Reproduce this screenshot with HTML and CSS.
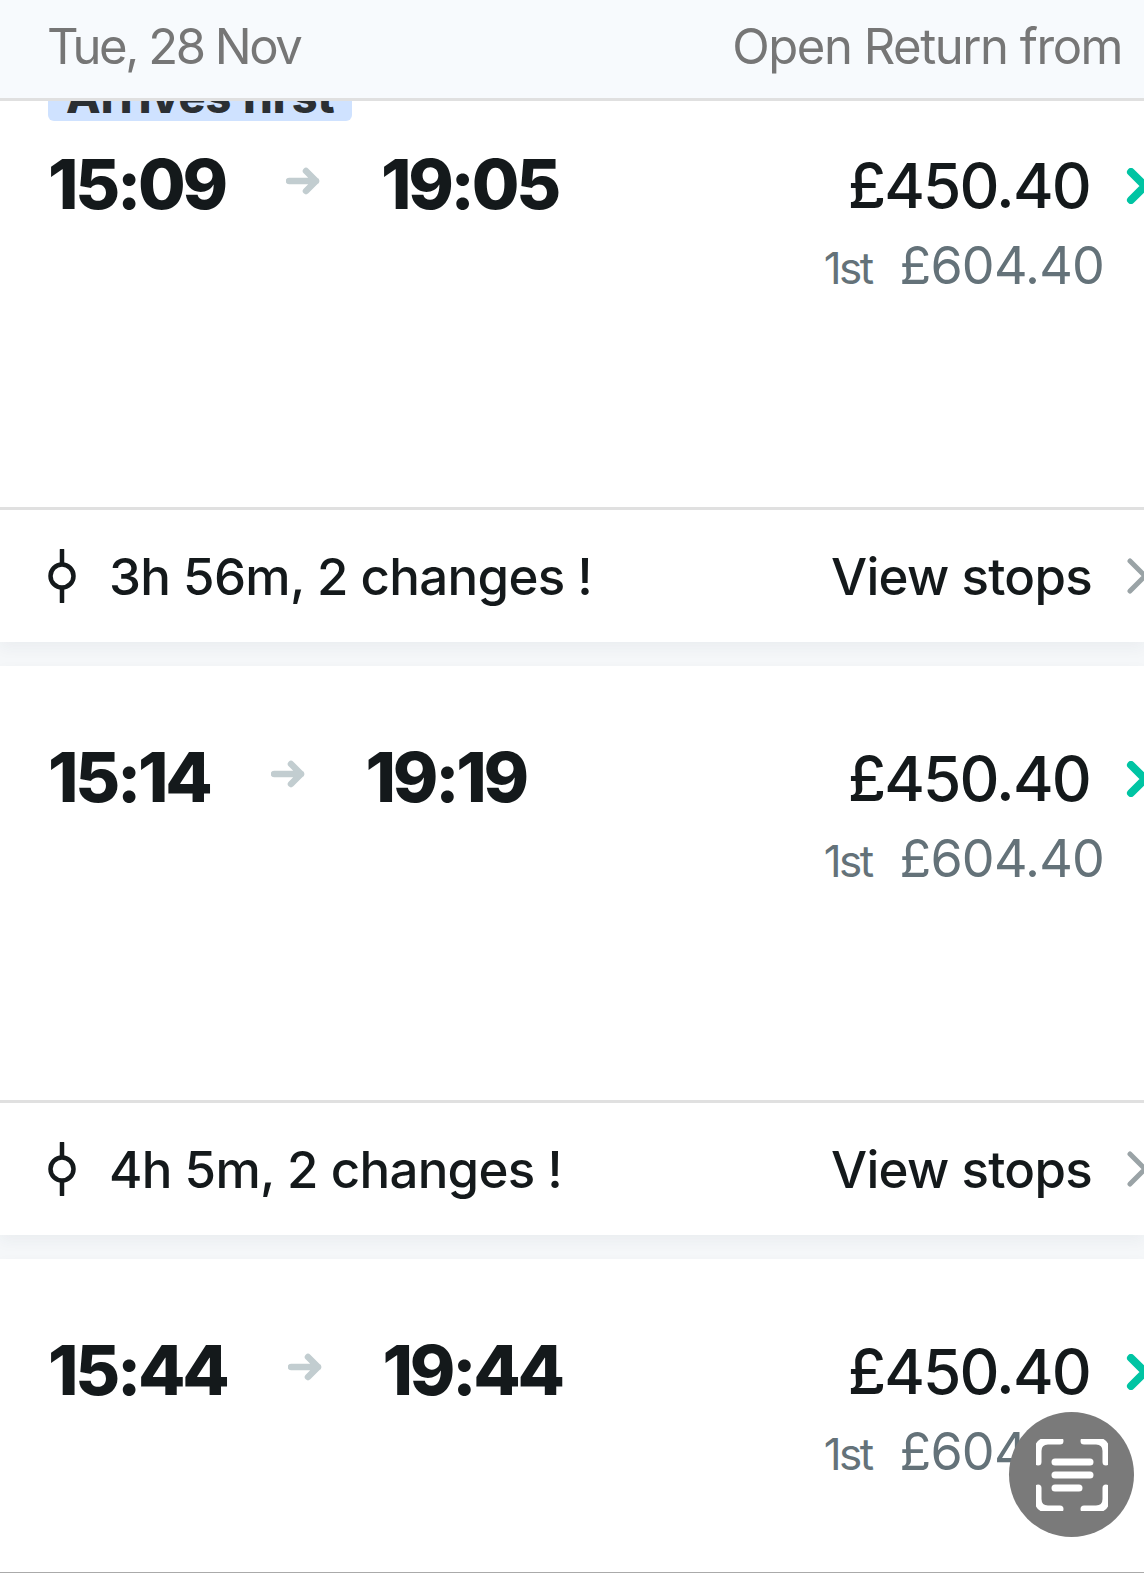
FILE: index.html
```html
<!DOCTYPE html>
<html lang="en">
<head>
<meta charset="utf-8">
<title>Train times</title>
<link rel="stylesheet" href="styles.css">
</head>
<body>
<div class="page">
  <header class="bar">
    <span class="bar-date">Tue, 28 Nov</span>
    <span class="bar-label">Open Return from</span>
  </header>
  <main class="list">
    <article class="card card-badged">
      <span class="badge">Arrives first</span>
      <div class="summary">
        <div class="times">
          <span class="time">15:09</span>
          <svg class="arrow" viewBox="0 0 34 28"><path d="M3 14H30M20 4L30 14L20 24"/></svg>
          <span class="time">19:05</span>
        </div>
        <div class="fares">
          <div class="fare-main">
            <span class="price">£450.40</span>
            <svg class="chev chev-green" viewBox="0 0 28 36"><path d="M5 4L19 18L5 32"/></svg>
          </div>
          <div class="fare-first"><span class="class-tag">1st</span><span class="price-first">£604.40</span></div>
        </div>
      </div>
      <div class="details">
        <svg class="stop-icon" viewBox="0 0 28 54"><path d="M14 1V14M14 40V53"/><circle cx="14" cy="27" r="11.5"/></svg>
        <span class="duration">3h 56m, 2 changes !</span>
        <span class="stops">View stops</span>
        <svg class="chev chev-grey" viewBox="0 0 28 36"><path d="M3 3L18 18L3 33"/></svg>
      </div>
    </article>
    <article class="card">
      <div class="summary">
        <div class="times">
          <span class="time">15:14</span>
          <svg class="arrow" viewBox="0 0 34 28"><path d="M3 14H30M20 4L30 14L20 24"/></svg>
          <span class="time">19:19</span>
        </div>
        <div class="fares">
          <div class="fare-main">
            <span class="price">£450.40</span>
            <svg class="chev chev-green" viewBox="0 0 28 36"><path d="M5 4L19 18L5 32"/></svg>
          </div>
          <div class="fare-first"><span class="class-tag">1st</span><span class="price-first">£604.40</span></div>
        </div>
      </div>
      <div class="details">
        <svg class="stop-icon" viewBox="0 0 28 54"><path d="M14 1V14M14 40V53"/><circle cx="14" cy="27" r="11.5"/></svg>
        <span class="duration">4h 5m, 2 changes !</span>
        <span class="stops">View stops</span>
        <svg class="chev chev-grey" viewBox="0 0 28 36"><path d="M3 3L18 18L3 33"/></svg>
      </div>
    </article>
    <article class="card">
      <div class="summary">
        <div class="times">
          <span class="time">15:44</span>
          <svg class="arrow" viewBox="0 0 34 28"><path d="M3 14H30M20 4L30 14L20 24"/></svg>
          <span class="time">19:44</span>
        </div>
        <div class="fares">
          <div class="fare-main">
            <span class="price">£450.40</span>
            <svg class="chev chev-green" viewBox="0 0 28 36"><path d="M5 4L19 18L5 32"/></svg>
          </div>
          <div class="fare-first"><span class="class-tag">1st</span><span class="price-first">£604.40</span></div>
        </div>
      </div>
    </article>
  </main>
  <button class="scan" aria-label="Scan text">
    <svg viewBox="0 0 72 72"><path d="M2 23V12Q2 2 12 2H24M48 2H60Q70 2 70 12V23M2 49V60Q2 70 12 70H24M48 70H60Q70 70 70 60V49"/><path class="scan-lines" d="M19 23H54M19 36H54M19 49H43"/></svg>
  </button>
  <div class="edge"></div>
</div>
</body>
</html>
```
FILE: styles.css
```css
* { box-sizing: border-box; }
html, body { margin: 0; height: 100%; }
body { font-family: Inter, "Liberation Sans", sans-serif; color: #14191b; background: #fff; overflow: hidden; }
.page { position: relative; width: 1144px; height: 1573px; overflow: hidden; background: #f5f7f9; }

.bar { position: absolute; top: 0; left: 0; right: 0; z-index: 2; height: 101px; padding: 0 22px 6px 47px; display: flex; align-items: center; justify-content: space-between; background: #f7fafd; border-bottom: 3px solid #e0e0e0; color: #767676; font-size: 49px; }
.bar-date { letter-spacing: -0.05em; }
.bar-label { letter-spacing: -0.03em; }

.list { padding-top: 75px; display: flex; flex-direction: column; gap: 24px; }
.card { position: relative; background: #fff; box-shadow: 0 6px 14px rgba(40, 60, 80, 0.05); }

.badge { position: absolute; left: 48px; top: 0; width: 304px; height: 46px; padding-left: 18px; border-radius: 6px; background: #cfe2ff; color: #2b2f33; font-size: 45px; font-weight: 800; line-height: 44px; }

.summary { height: 434px; padding: 78px 0 0 48px; display: flex; justify-content: space-between; align-items: flex-start; }
.card-badged .summary { height: 432px; padding-top: 76px; }
.times { display: flex; align-items: center; gap: 61px; }
.time { font-size: 69px; font-weight: 800; line-height: 66px; letter-spacing: -0.047em; }
.arrow { width: 34px; height: 28px; margin-bottom: 6px; fill: none; stroke: #c2cdd0; stroke-width: 6.5; stroke-linecap: round; stroke-linejoin: round; }

.fares { padding-right: 40px; display: grid; justify-items: end; }
.fare-main { display: flex; align-items: center; gap: 36px; margin-right: -50px; }
.price { font-size: 62px; font-weight: 500; line-height: 70px; letter-spacing: -0.03em; }
.fare-first { display: flex; align-items: baseline; gap: 28px; color: #647279; margin-top: 15px; }
.class-tag { font-size: 44px; letter-spacing: -0.06em; }
.price-first { font-size: 52px; line-height: 60px; letter-spacing: -0.015em; }

.chev { flex: none; width: 28px; height: 36px; fill: none; stroke-linecap: round; stroke-linejoin: round; }
.chev-green { stroke: #00c4a3; stroke-width: 8; }
.chev-grey { stroke: #9aa3a6; stroke-width: 5; }

.details { height: 135px; padding: 0 0 0 48px; display: flex; align-items: center; border-top: 3px solid #e0e0e0; font-size: 51px; font-weight: 550; letter-spacing: -0.014em; }
.stop-icon { flex: none; width: 28px; height: 54px; fill: none; stroke: #14191b; stroke-width: 4.5; stroke-linecap: round; }
.duration { margin-left: 33px; }
.stops { margin-left: auto; margin-right: 35px; }
.details .chev { margin-right: -11px; }

.scan { position: absolute; left: 1009px; top: 1412px; width: 125px; height: 125px; padding: 0; border: 0; border-radius: 50%; background: #7a7a7a; display: flex; align-items: center; justify-content: center; }
.scan svg { width: 72px; height: 72px; fill: none; stroke: #fff; stroke-width: 7; stroke-linecap: round; }
.edge { position: absolute; left: 0; right: 0; bottom: 0; height: 1px; background: #aaa; }
```
